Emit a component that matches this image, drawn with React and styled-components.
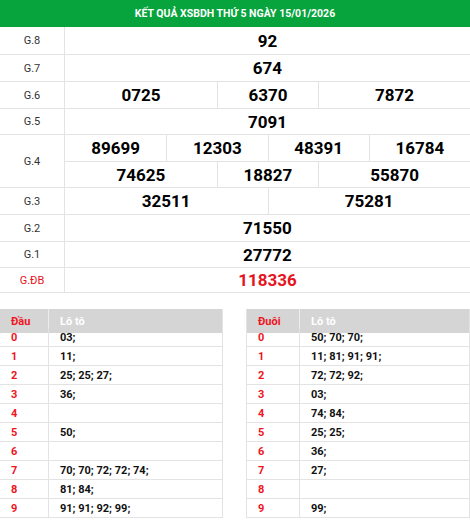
import React from 'react';
import styled, { createGlobalStyle } from 'styled-components';

const Global = createGlobalStyle`
  html, body { margin: 0; padding: 0; background: #fff; }
  body { font-family: Roboto, "Liberation Sans", Arial, sans-serif; color: #111; }
  * { box-sizing: border-box; }
`;

const Page = styled.div`
  width: 470px;
`;

const Title = styled.div`
  height: 27px;
  background: #07a33c;
  color: #fff;
  font-weight: 700;
  font-size: 10.5px;
  display: flex;
  align-items: center;
  justify-content: center;
  text-transform: uppercase;
`;

const ResultGrid = styled.div`
  display: grid;
  grid-template-columns: 65px repeat(8, 1fr);
  grid-template-rows: 28px 27px 27px 26px 27px 26px 27px 27px 26px 25px;
`;

const Label = styled.div`
  grid-row: span ${(p) => p.$rows || 1};
  display: flex;
  align-items: center;
  justify-content: center;
  font-size: 11px;
  color: ${(p) => (p.$special ? '#e5141e' : '#333')};
  border-right: 1px solid #e3e3e3;
  border-bottom: 1px solid #e3e3e3;
`;

const Num = styled.div`
  grid-column: span ${(p) => p.$span};
  display: flex;
  align-items: center;
  justify-content: center;
  font-size: 17px;
  font-weight: 700;
  color: ${(p) => (p.$special ? '#e5141e' : '#000')};
  border-bottom: 1px solid #e3e3e3;
  border-left: ${(p) => (p.$first ? 'none' : '1px solid #e3e3e3')};
`;

const LotoWrap = styled.div`
  display: grid;
  grid-template-columns: 223px 1fr;
  column-gap: 23px;
  margin-top: 16px;
`;

const LotoTable = styled.div`
  display: grid;
  grid-template-columns: ${(p) => p.$first}px 1fr;
  grid-auto-rows: 19px;
  border-left: ${(p) => (p.$edge ? '1px solid #e3e3e3' : 'none')};
  border-right: 1px solid #e3e3e3;
`;

const HeadCell = styled.div`
  height: 24px;
  background: #d5d5d5;
  display: flex;
  align-items: center;
  padding-left: 11px;
  font-size: 11px;
  font-weight: 700;
  color: ${(p) => (p.$red ? '#f0141e' : '#fff')};
  border-right: ${(p) => (p.$red ? '1px solid #ececec' : 'none')};
`;

const Cell = styled.div`
  display: flex;
  align-items: center;
  padding-left: 11px;
  font-size: 11px;
  font-weight: 700;
  color: ${(p) => (p.$red ? '#f0141e' : '#111')};
  border-bottom: 1px solid #e3e3e3;
  border-right: ${(p) => (p.$red ? '1px solid #e3e3e3' : 'none')};
  white-space: nowrap;
`;

const rows = [
  { label: 'G.8', lines: [[['92', 8]]] },
  { label: 'G.7', lines: [[['674', 8]]] },
  { label: 'G.6', lines: [[['0725', 3], ['6370', 2], ['7872', 3]]] },
  { label: 'G.5', lines: [[['7091', 8]]] },
  {
    label: 'G.4',
    lines: [
      [['89699', 2], ['12303', 2], ['48391', 2], ['16784', 2]],
      [['74625', 3], ['18827', 2], ['55870', 3]],
    ],
  },
  { label: 'G.3', lines: [[['32511', 4], ['75281', 4]]] },
  { label: 'G.2', lines: [[['71550', 8]]] },
  { label: 'G.1', lines: [[['27772', 8]]] },
  { label: 'G.ĐB', lines: [[['118336', 8]]], special: true },
];

const dau = ['03;', '11;', '25; 25; 27;', '36;', '', '50;', '', '70; 70; 72; 72; 74;', '81; 84;', '91; 91; 92; 99;'];
const duoi = ['50; 70; 70;', '11; 81; 91; 91;', '72; 72; 92;', '03;', '74; 84;', '25; 25;', '36;', '27;', '', '99;'];

function Loto({ title, data, first, edge }) {
  return (
    <LotoTable $first={first} $edge={edge}>
      <HeadCell $red>{title}</HeadCell>
      <HeadCell>Lô tô</HeadCell>
      {data.map((v, i) => (
        <React.Fragment key={i}>
          <Cell $red>{i}</Cell>
          <Cell>{v}</Cell>
        </React.Fragment>
      ))}
    </LotoTable>
  );
}

export default function App() {
  return (
    <Page>
      <Global />
      <Title>Kết quả XSBDH Thứ 5 ngày 15/01/2026</Title>
      <ResultGrid>
        {rows.map((r) => (
          <React.Fragment key={r.label}>
            <Label $rows={r.lines.length} $special={r.special}>{r.label}</Label>
            {r.lines.map((line, li) =>
              line.map(([n, span], ni) => (
                <Num key={`${li}-${ni}`} $span={span} $first={ni === 0} $special={r.special}>
                  {n}
                </Num>
              ))
            )}
          </React.Fragment>
        ))}
      </ResultGrid>
      <LotoWrap>
        <Loto title="Đầu" data={dau} first={49} />
        <Loto title="Đuôi" data={duoi} first={53} edge />
      </LotoWrap>
    </Page>
  );
}
